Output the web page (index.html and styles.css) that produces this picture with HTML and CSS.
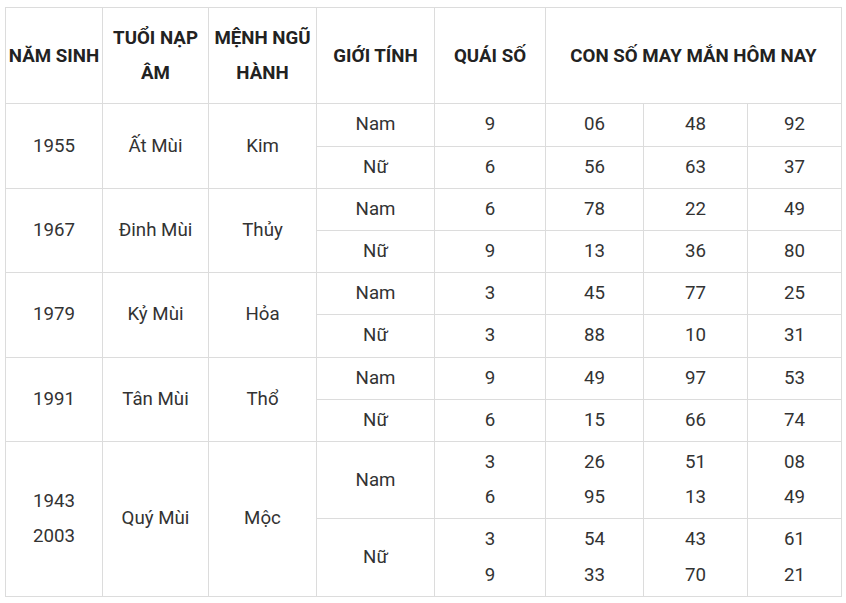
FILE: index.html
```html
<!DOCTYPE html>
<html lang="vi">
<head>
<meta charset="utf-8">
<link rel="stylesheet" href="styles.css">
</head>
<body>
<div class="wrap">
<table class="luck">
<colgroup>
<col class="c1"><col class="c2"><col class="c3"><col class="c4"><col class="c5"><col class="c6"><col class="c7"><col class="c8">
</colgroup>
<thead>
<tr>
<th>NĂM SINH</th>
<th>TUỔI NẠP ÂM</th>
<th>MỆNH NGŨ HÀNH</th>
<th>GIỚI TÍNH</th>
<th>QUÁI SỐ</th>
<th colspan="3">CON SỐ MAY MẮN HÔM NAY</th>
</tr>
</thead>
<tbody>
<tr><td rowspan="2">1955</td><td rowspan="2">Ất Mùi</td><td rowspan="2">Kim</td><td>Nam</td><td>9</td><td>06</td><td>48</td><td>92</td></tr>
<tr><td>Nữ</td><td>6</td><td>56</td><td>63</td><td>37</td></tr>
<tr><td rowspan="2">1967</td><td rowspan="2">Đinh Mùi</td><td rowspan="2">Thủy</td><td>Nam</td><td>6</td><td>78</td><td>22</td><td>49</td></tr>
<tr><td>Nữ</td><td>9</td><td>13</td><td>36</td><td>80</td></tr>
<tr><td rowspan="2">1979</td><td rowspan="2">Kỷ Mùi</td><td rowspan="2">Hỏa</td><td>Nam</td><td>3</td><td>45</td><td>77</td><td>25</td></tr>
<tr><td>Nữ</td><td>3</td><td>88</td><td>10</td><td>31</td></tr>
<tr><td rowspan="2">1991</td><td rowspan="2">Tân Mùi</td><td rowspan="2">Thổ</td><td>Nam</td><td>9</td><td>49</td><td>97</td><td>53</td></tr>
<tr><td>Nữ</td><td>6</td><td>15</td><td>66</td><td>74</td></tr>
<tr><td rowspan="2">1943<br>2003</td><td rowspan="2">Quý Mùi</td><td rowspan="2">Mộc</td><td>Nam</td><td>3<br>6</td><td>26<br>95</td><td>51<br>13</td><td>08<br>49</td></tr>
<tr><td>Nữ</td><td>3<br>9</td><td>54<br>33</td><td>43<br>70</td><td>61<br>21</td></tr>
</tbody>
</table>
</div>
</body>
</html>
```
FILE: styles.css
```css
html, body {
  margin: 0;
  padding: 0;
  background: #fff;
}
.wrap {
  padding: 7px 5px 0 5px;
}
.luck {
  border-collapse: collapse;
  table-layout: fixed;
  width: 836px;
  font-family: Roboto, "Liberation Sans", sans-serif;
  font-size: 18.7px;
  color: #333;
}
.c1 { width: 97px; }
.c2 { width: 106px; }
.c3 { width: 108px; }
.c4 { width: 118px; }
.c5 { width: 111px; }
.c6 { width: 98px; }
.c7 { width: 104px; }
.c8 { width: 94px; }
.luck th,
.luck td {
  border: 1px solid #dcdcdc;
  text-align: center;
  vertical-align: middle;
  line-height: 35.2px;
  padding: 3px 2px;
}
.luck th {
  font-weight: 700;
  color: #222;
  padding: 13px 2px 12px;
}
```
